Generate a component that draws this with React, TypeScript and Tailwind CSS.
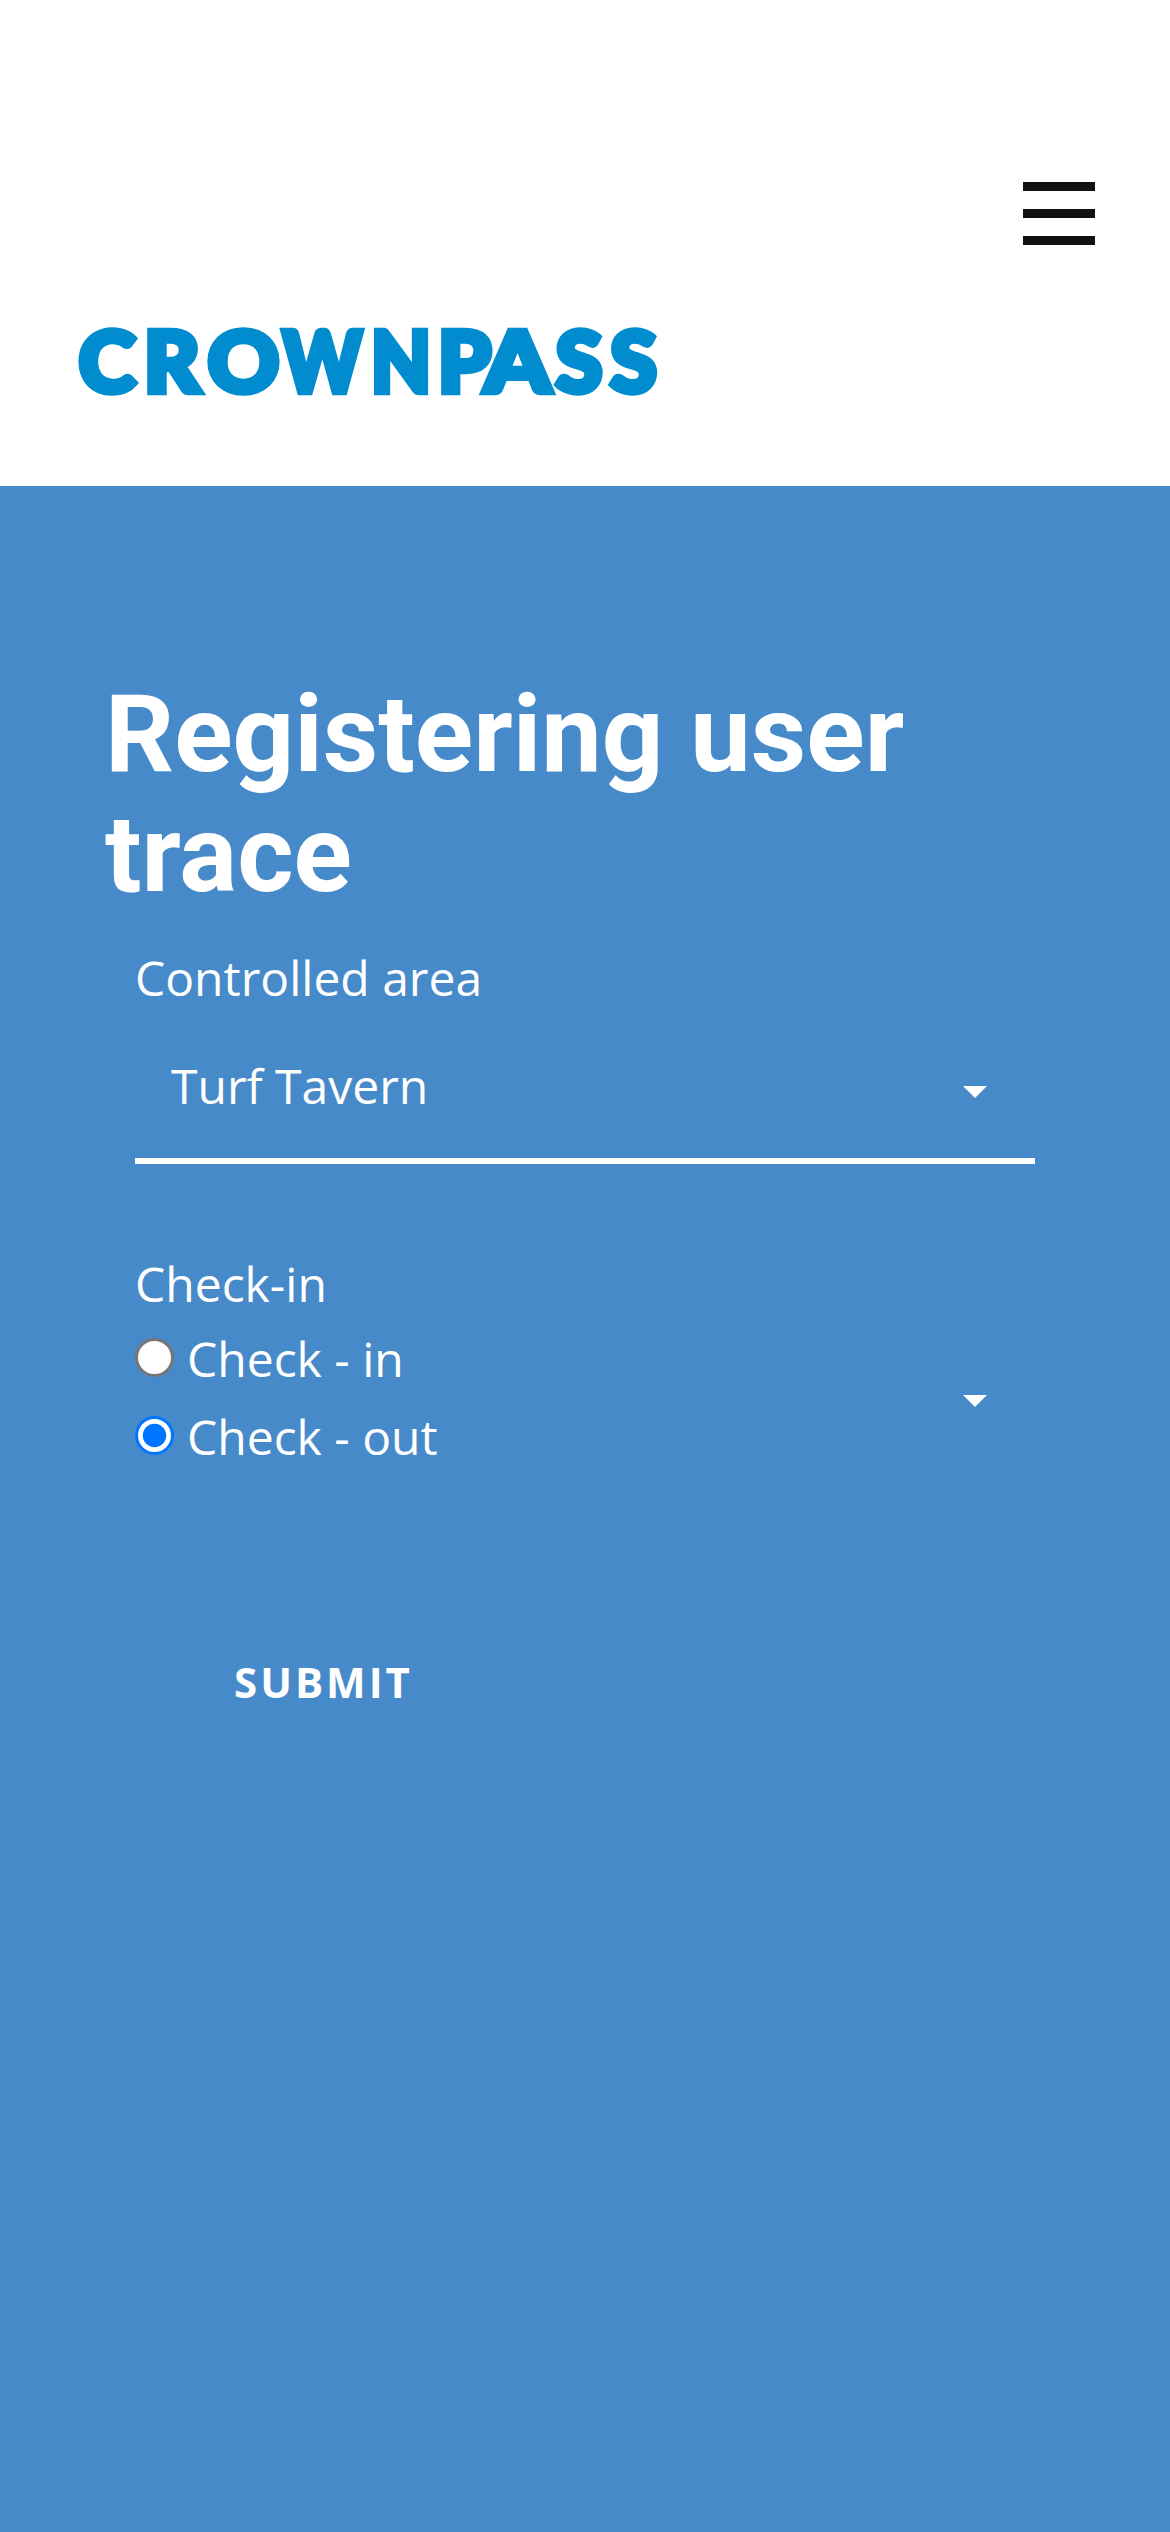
const letters = [
  { ch: "C", x: 78.7, w: 56.5 },
  { ch: "R", x: 144, w: 55.8 },
  { ch: "O", x: 207.7, w: 71.5 },
  { ch: "W", x: 282.7, w: 79 },
  { ch: "N", x: 371, w: 60 },
  { ch: "P", x: 438, w: 53 },
  { ch: "A", x: 484.7, w: 65.5 },
  { ch: "S", x: 555.7, w: 46.5 },
  { ch: "S", x: 610.2, w: 46.5 },
];

function Logo() {
  return (
    <svg width="600" height="130" viewBox="70 296 600 130" role="img" aria-label="CROWNPASS" className="block overflow-visible">
      <g
        fontFamily="Lato, sans-serif"
        fontWeight="900"
        fontSize="84.5"
        fill="#008ccf"
        stroke="#008ccf"
        strokeWidth="6.5"
        strokeLinejoin="miter"
      >
        {letters.map((l, i) => (
          <text key={i} x={l.x} y="391.8" textLength={l.w} lengthAdjust="spacingAndGlyphs">
            {l.ch}
          </text>
        ))}
      </g>
    </svg>
  );
}

function Caret() {
  return (
    <svg width="24" height="12" viewBox="0 0 24 12" className="block" fill="#fff">
      <path d="M0 0h24L12 12z" />
    </svg>
  );
}

function Radio({ checked }: { checked?: boolean }) {
  return (
    <svg width="39" height="39" viewBox="0 0 39 39" className="block">
      <circle cx="19.5" cy="19.5" r="18" fill="#fff" stroke={checked ? "#0075ff" : "#767676"} strokeWidth="3" />
      {checked && <circle cx="19.5" cy="19.5" r="11.7" fill="#0075ff" />}
    </svg>
  );
}

export default function App() {
  return (
    <div className="flex h-[2532px] w-[1170px] flex-col overflow-hidden bg-white font-['Open_Sans',sans-serif] text-[48px] text-white">
      <header className="h-[486px] shrink-0">
        <div className="flex justify-end pt-[181.5px] pr-[75px]">
          <button aria-label="Menu" className="block h-[63px] w-[72px]">
            <svg width="72" height="63" viewBox="0 0 72 63" className="block" fill="#111">
              <rect width="72" height="9" />
              <rect y="27" width="72" height="9" />
              <rect y="54" width="72" height="9" />
            </svg>
          </button>
        </div>
        <div className="pt-[51.5px] pl-[70px]">
          <Logo />
        </div>
      </header>

      <main className="grow bg-[#478ac9] pt-[188px]">
        <h1 className="ml-[105px] w-[900px] font-['Roboto',sans-serif] text-[108px] leading-[120px] font-bold">
          Registering user trace
        </h1>
        <form className="mt-[25px] ml-[135px] w-[900px]">
          <label className="block leading-[78px]">Controlled area</label>
          <div className="flex h-[147px] items-start justify-between border-b-[6px] border-white pt-[30px] pr-[48px] pl-[36px]">
            <span className="leading-[78px]">Turf Tavern</span>
            <span className="mt-[39px]">
              <Caret />
            </span>
          </div>

          <label className="mt-[83px] block leading-[73px]">Check-in</label>
          <div className="flex items-start justify-between pr-[48px]">
            <div>
              <div className="flex h-[78px] gap-[13px] leading-[78px]">
                <span className="mt-[18px]">
                  <Radio />
                </span>
                Check - in
              </div>
              <div className="flex h-[78px] gap-[13px] leading-[78px]">
                <span className="mt-[18px]">
                  <Radio checked />
                </span>
                Check - out
              </div>
            </div>
            <span className="mt-[75px]">
              <Caret />
            </span>
          </div>

          <button type="button" className="mt-[170px] ml-[99px] block text-[42px] leading-[72px] font-bold tracking-[3px]">
            SUBMIT
          </button>
        </form>
      </main>
    </div>
  );
}
